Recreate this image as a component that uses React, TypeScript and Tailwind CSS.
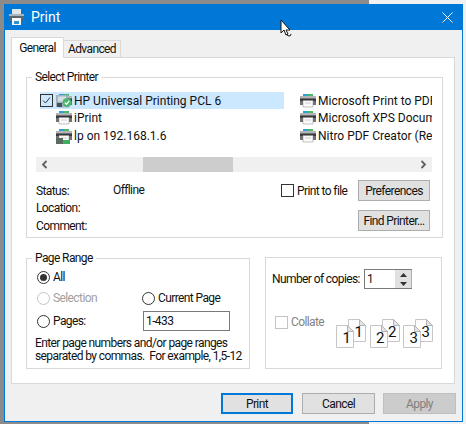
import React from "react";

function PrinterIcon({ variant = "plain" }: { variant?: "plain" | "hp" | "net" }) {
  return (
    <svg width="16" height="16" viewBox="0 0 16 16" className="shrink-0">
      <path d="M3 1h5v2H3z" fill="#2f9fd8" />
      <path d="M8 1h5v2H8z" fill="#47b96a" />
      <path d="M0 3h16v9H0z" fill="#6f7073" />
      <path d="M0 3h16v2H0z" fill="#b3b4b6" />
      <path d="M0 6h16v2H0z" fill="#3a3a3c" />
      <path d="M3 7.500h10V14H3z" fill="#fafafa" stroke="#8a8a8a" strokeWidth="0.500" />
      <path d="M5 9.500h6v1H5z" fill="#d0d0d0" />
      {variant === "hp" && (
        <>
          <path d="M0 2h12v12H0z" fill="#9fb2bd" />
          <path d="M2 3.500h8v5H2z" fill="#d7dee2" />
          <path d="M1 10h5v4H1z" fill="#41525c" />
          <circle cx="11" cy="9.500" r="4.500" fill="#4db574" />
          <path d="M8.800 9.500l1.800 1.800 2.600-3.400" stroke="#fff" strokeWidth="1.200" fill="none" />
        </>
      )}
      {variant === "net" && (
        <>
          <path d="M0 10h7v6H0z" fill="#5a6b62" />
          <path d="M7 12h7v4H7z" fill="#3fae62" />
        </>
      )}
    </svg>
  );
}

function Radio({ checked, disabled }: { checked?: boolean; disabled?: boolean }) {
  return (
    <span
      className={`flex h-[13px] w-[13px] shrink-0 items-center justify-center rounded-full border ${disabled ? "border-[#c4c4c4]" : "border-[#333333]"}`}
    >
      {checked && <span className="h-[7px] w-[7px] rounded-full bg-[#333333]" />}
    </span>
  );
}

function Btn({ children, className = "" }: { children: React.ReactNode; className?: string }) {
  return (
    <div
      className={`flex items-center justify-center border border-[#adadad] bg-[#e1e1e1] ${className}`}
    >
      {children}
    </div>
  );
}

function PageDoc({ n, className = "" }: { n: number; className?: string }) {
  return (
    <div className={`absolute h-[23px] w-[18px] ${className}`}>
      <svg width="18" height="23" viewBox="0 0 18 23" className="absolute left-0 top-0">
        <path d="M.5.500h11l6 6v16H.5z" fill="#fdfdfd" stroke="#c6c6c6" />
        <path d="M11.500.500v6h6z" fill="#e4e4e4" stroke="#b4b4b4" />
      </svg>
      <span className="absolute bottom-[1px] right-[3px] text-[15px] leading-[17px] tracking-normal">{n}</span>
    </div>
  );
}

function Pair({ n }: { n: number }) {
  return (
    <div className="relative h-[29px] w-[33.500px]">
      <PageDoc n={n} className="left-[12px] top-0" />
      <PageDoc n={n} className="left-0 top-[6px]" />
    </div>
  );
}

export default function App() {
  return (
    <div className="h-[424px] w-[466px] overflow-hidden bg-[linear-gradient(90deg,#8b8b8b_369px,#f1f1f1_369px)] pl-[4px] pt-[4px] font-['Roboto',sans-serif] text-[12px] leading-[16px] tracking-[-0.600px] text-[#111111]">
      <div className="relative h-[418px] w-[459px] border border-t-0 border-[#0078d7] bg-[#f0f0f0]">
        {/* title bar */}
        <div className="flex h-[26px] items-center justify-between bg-[#0078d7] pl-[3px] pr-[9px]">
          <div className="flex items-center gap-[6px]">
            <svg width="17" height="18" viewBox="0 0 17 18">
              <path d="M4 1h9v6H4z" fill="#dfe6ec" />
              <path d="M1 6h15v7H1z" fill="#5b6670" />
              <path d="M1 6h15v2H1z" fill="#aab4bc" />
              <path d="M4 10h9v7H4z" fill="#f5f7f9" />
              <path d="M6 13h5v3H6z" fill="#2c93cf" />
            </svg>
            <span className="text-[14px] tracking-normal text-white">Print</span>
          </div>
          <svg width="11" height="11" viewBox="0 0 11 11">
            <path d="M.5.500l10 10M10.500.500l-10 10" stroke="#fff" strokeWidth="1" />
          </svg>
        </div>

        {/* tabs */}
        <div className="flex h-[27px] items-end pl-[6px]">
          <div className="relative z-10 -mb-px flex h-[21px] w-[53px] items-center justify-center border border-b-0 border-[#d9d9d9] bg-white">
            General
          </div>
          <div className="flex h-[17px] w-[57px] items-center justify-center border border-l-0 border-b-0 border-[#d9d9d9] bg-[#f0f0f0]">
            Advanced
          </div>
        </div>

        {/* page */}
        <div className="ml-[6px] h-[327px] w-[444px] border border-[#d9d9d9] bg-white pl-[14px] pt-[11px]">
          <fieldset className="h-[169px] w-[417px] min-w-0 border border-[#d9d9d9] pl-[9px] pr-[10px]">
            <legend className="ml-[-4px] px-[3px]">Select Printer</legend>
            <div className="mt-[7px] flex h-[65px] w-[396px] overflow-hidden whitespace-nowrap tracking-normal">
              <div className="flex w-[264px] shrink-0 flex-col">
                <div className="ml-[4px] flex h-[17px] w-[244px] items-center bg-[#cce8ff]">
                  <span className="flex h-[13px] w-[13px] items-center justify-center border border-[#333333]">
                    <svg width="11" height="11" viewBox="0 0 11 11">
                      <path d="M2 5.500l2.500 2.500L9 2.500" stroke="#333" fill="none" />
                    </svg>
                  </span>
                  <span className="ml-[3px]"><PrinterIcon variant="hp" /></span>
                  <span className="ml-[2px]">HP Universal Printing PCL 6</span>
                </div>
                <div className="ml-[20px] flex h-[18px] items-center">
                  <PrinterIcon />
                  <span className="ml-[2px]">iPrint</span>
                </div>
                <div className="ml-[20px] flex h-[17px] items-center">
                  <PrinterIcon variant="net" />
                  <span className="ml-[2px]">lp on 192.168.1.6</span>
                </div>
              </div>
              <div className="flex flex-col">
                <div className="flex h-[17px] items-center">
                  <PrinterIcon />
                  <span className="ml-[2px]">Microsoft Print to PDF</span>
                </div>
                <div className="flex h-[18px] items-center">
                  <PrinterIcon />
                  <span className="ml-[2px]">Microsoft XPS Document Writer</span>
                </div>
                <div className="flex h-[17px] items-center">
                  <PrinterIcon />
                  <span className="ml-[2px]">Nitro PDF Creator (Reader 9)</span>
                </div>
              </div>
            </div>
            <div className="flex h-[15px] w-[396px] items-center bg-[#f0f0f0]">
              <div className="flex w-[107px] items-center pl-[5px]">
                <svg width="7" height="9" viewBox="0 0 7 9">
                  <path d="M5.500 1L2 4.500 5.500 8" stroke="#606060" strokeWidth="1.800" fill="none" />
                </svg>
              </div>
              <div className="h-full w-[90px] bg-[#cdcdcd]" />
              <div className="ml-auto flex pr-[5px]">
                <svg width="7" height="9" viewBox="0 0 7 9">
                  <path d="M1.500 1L5 4.500 1.500 8" stroke="#606060" strokeWidth="1.800" fill="none" />
                </svg>
              </div>
            </div>
            <div className="flex">
              <div className="mt-[10px] grid w-[77px] auto-rows-[17.500px] items-center">
                <span>Status:</span>
                <span>Location:</span>
                <span>Comment:</span>
              </div>
              <div className="mt-[10px]">Offline</div>
              <div className="ml-auto mr-[2px] mt-[8px] flex w-[149px] flex-col items-end">
                <div className="flex h-[21px] w-full items-center">
                  <span className="mt-[-1px] h-[13px] w-[13px] border border-[#333333]" />
                  <span className="ml-[3px]">Print to file</span>
                  <Btn className="ml-auto h-[21px] w-[72px]">Preferences</Btn>
                </div>
                <Btn className="mt-[9px] h-[21px] w-[72px]">Find Printer...</Btn>
              </div>
            </div>
          </fieldset>

          <div className="mt-[12px] flex items-start">
            <fieldset className="h-[119px] w-[224px] min-w-0 border border-[#d9d9d9] pl-[10px] pr-[4px]">
              <legend className="ml-[-5px] px-[3px]">Page Range</legend>
              <div className="mt-[3px] flex h-[16px] items-center gap-[3px]">
                <Radio checked />
                <span>All</span>
              </div>
              <div className="mt-[5px] flex h-[16px] items-center">
                <div className="flex w-[105px] items-center gap-[3px] text-[#a0a0a0]">
                  <Radio disabled />
                  <span>Selection</span>
                </div>
                <div className="flex items-center gap-[3px]">
                  <Radio />
                  <span>Current Page</span>
                </div>
              </div>
              <div className="mt-[5px] flex h-[20px] items-center">
                <div className="flex w-[106px] items-center gap-[3px]">
                  <Radio />
                  <span>Pages:</span>
                </div>
                <div className="flex h-[20px] w-[87px] items-center border border-[#7a7a7a] pl-[2px]">1-433</div>
              </div>
              <div className="ml-[-2px] mt-[6px] whitespace-nowrap leading-[13px]">
                Enter page numbers and/or page ranges
                <br />
                separated by commas.&nbsp; For example, 1,5-12
              </div>
            </fieldset>

            <div className="ml-[15px] mt-[7px] h-[112px] w-[177px] border border-[#d9d9d9] pl-[6px]">
              <div className="mt-[11px] flex h-[20px] items-center">
                <span className="w-[92px] whitespace-nowrap">Number of copies:</span>
                <div className="flex h-[20px] w-[48px] border border-[#7a7a7a] border-r-0 pl-[2px] leading-[18px]">
                  <span className="w-[29px]">1</span>
                  <div className="flex h-[18px] w-[17px] flex-col items-center justify-around border border-y-0 border-l-0 border-[#adadad] bg-[#e1e1e1]">
                    <svg width="7" height="4" viewBox="0 0 7 4"><path d="M3.500 0L7 4H0z" fill="#333" /></svg>
                    <svg width="7" height="4" viewBox="0 0 7 4"><path d="M3.500 4L7 0H0z" fill="#333" /></svg>
                  </div>
                </div>
              </div>
              <div className="mt-[24px] flex items-start">
                <div className="ml-[3px] mt-[1px] flex w-[61px] items-center text-[#838383]">
                  <span className="h-[13px] w-[13px] border border-[#c4c4c4]" />
                  <span className="ml-[3px]">Collate</span>
                </div>
                <div className="mt-[6px] flex">
                  <Pair n={1} />
                  <Pair n={2} />
                  <Pair n={3} />
                </div>
              </div>
            </div>
          </div>
        </div>

        {/* bottom buttons */}
        <div className="mt-[9px] flex justify-end pr-[6px]">
          <div className="flex h-[21px] w-[72px] items-center justify-center border-2 border-[#0078d7] bg-[#e1e1e1]">Print</div>
          <Btn className="ml-[9px] h-[21px] w-[73px]">Cancel</Btn>
          <div className="ml-[8px] flex h-[21px] w-[73px] items-center justify-center border border-[#bfbfbf] bg-[#cccccc] text-[#7f7f7f]">Apply</div>
        </div>

        {/* mouse cursor */}
        <svg width="14" height="19" viewBox="0 0 14 19" className="absolute left-[275px] top-[15px]">
          <path d="M1 1v13l3-3 2 5 2-1-2-4h4z" fill="#fff" stroke="#111" strokeWidth="1" />
          <path d="M7 15a2 2 0 1 0 4 0" stroke="#111" fill="none" />
        </svg>
      </div>
    </div>
  );
}
